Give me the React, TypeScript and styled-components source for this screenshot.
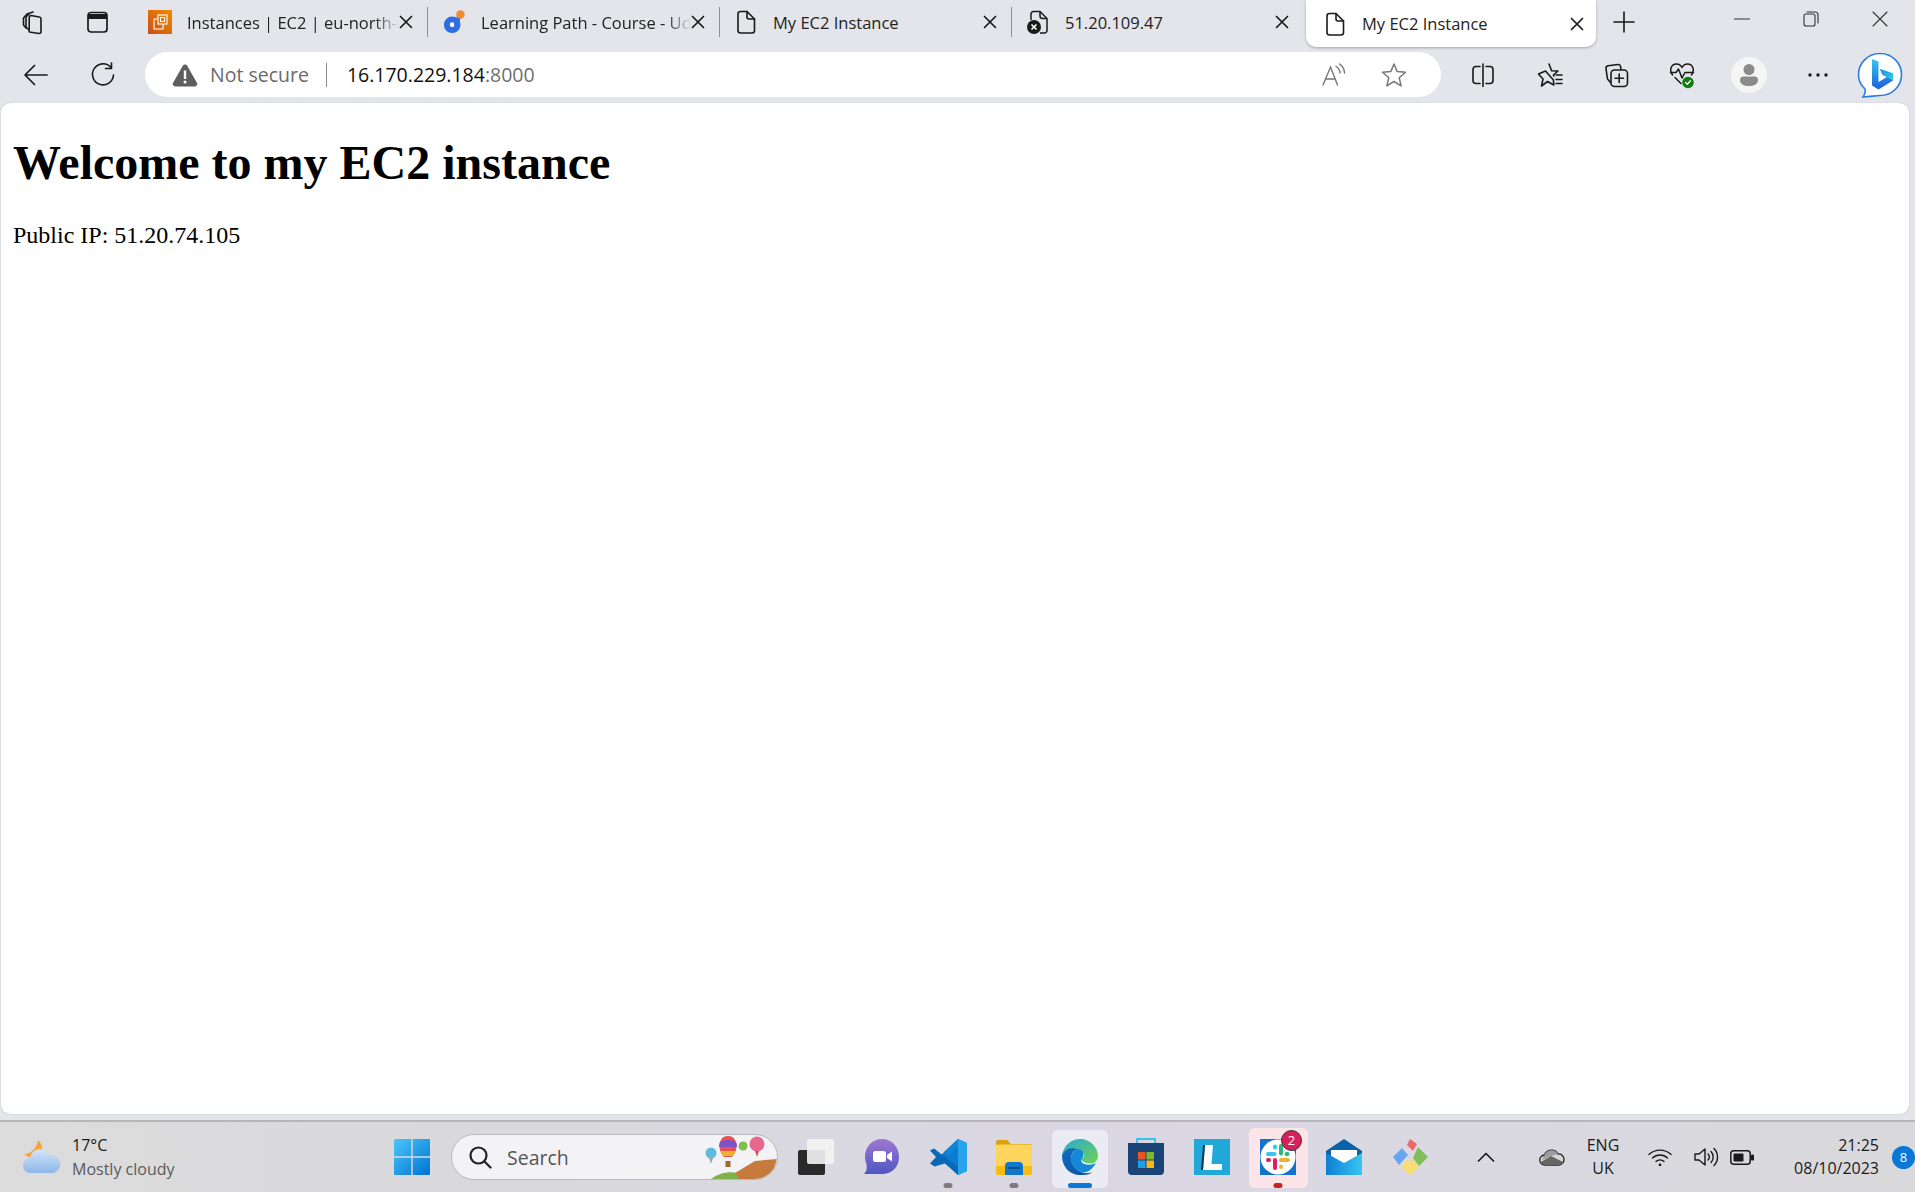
import styled, { createGlobalStyle } from "styled-components";
import { ReactNode } from "react";

const GlobalStyle = createGlobalStyle`
    html, body {
        margin: 0;
        padding: 0;
        height: 100%;
        overflow: hidden;
        background: #e3e5ea;
    }
    #root {
        height: 100%;
    }
`;

const UI_FONT = `"Open Sans", "Noto Sans", sans-serif`;

const Window = styled.div`
    height: 100vh;
    display: flex;
    flex-direction: column;
    font-family: ${UI_FONT};
    color: #1a1a1a;
`;

/* ---------- tab strip ---------- */

const TabStrip = styled.div`
    height: 52px;
    flex: none;
    display: flex;
    align-items: flex-start;
`;

const StripActions = styled.div`
    width: 134px;
    height: 44px;
    flex: none;
    display: flex;
    align-items: center;
`;

const StripSlot = styled.div<{ $w: number }>`
    width: ${(p) => p.$w}px;
    display: flex;
    justify-content: center;
    flex: none;
`;

const Tab = styled.div<{ $active?: boolean; $w: number }>`
    width: ${(p) => p.$w}px;
    height: ${(p) => (p.$active ? 47 : 44)}px;
    flex: none;
    display: flex;
    align-items: center;
    padding: 0 ${(p) => (p.$active ? 12 : 14)}px 0 ${(p) => (p.$active ? 17 : 14)}px;
    box-sizing: border-box;
    position: relative;
    background: ${(p) => (p.$active ? "#fff" : "transparent")};
    border-radius: ${(p) => (p.$active ? "0 0 10px 10px" : "0")};
    box-shadow: ${(p) => (p.$active ? "0 1px 3px rgba(0,0,0,.28)" : "none")};
    margin-left: ${(p) => (p.$active ? 3 : 0)}px;
`;

const TabSeparator = styled.div`
    width: 1px;
    height: 30px;
    margin-top: 7px;
    flex: none;
    background: #8f8f92;
`;

const TabIcon = styled.div`
    width: 24px;
    height: 24px;
    flex: none;
    display: flex;
    align-items: center;
    justify-content: center;
`;

const TabTitle = styled.div<{ $fade?: boolean }>`
    flex: 1;
    min-width: 0;
    margin-left: 15px;
    font-size: 16.5px;
    white-space: nowrap;
    overflow: hidden;
    color: #222;
    ${(p) =>
        p.$fade &&
        `-webkit-mask-image: linear-gradient(to right, #000 88%, transparent 100%);
         mask-image: linear-gradient(to right, #000 88%, transparent 100%);`}
`;

const WindowControls = styled.div`
    margin-left: auto;
    display: flex;
    align-items: center;
    height: 38px;
    padding-right: 0;
`;

const PlusSlot = styled.div`
    width: 56px;
    height: 44px;
    display: flex;
    align-items: center;
    justify-content: center;
    margin-left: 0;
`;

/* ---------- address row ---------- */

const ToolRow = styled.div`
    height: 45px;
    flex: none;
    display: flex;
    align-items: center;
`;

const NavButton = styled.div<{ $w: number }>`
    width: ${(p) => p.$w}px;
    flex: none;
    display: flex;
    align-items: center;
    justify-content: center;
`;

const AddressPill = styled.div`
    width: 1296px;
    height: 45px;
    flex: none;
    background: #fff;
    border-radius: 23px;
    display: flex;
    align-items: center;
    padding: 0 18px 0 27px;
    box-sizing: border-box;
`;

const NotSecure = styled.span`
    font-size: 19.5px;
    color: #6a6a6a;
    margin-left: 12px;
`;

const AddressDivider = styled.div`
    width: 1px;
    height: 24px;
    background: #8a8a8a;
    margin: 0 20px 0 17px;
`;

const Url = styled.span`
    font-size: 19.5px;
    color: #111;
    flex: 1;
`;

const UrlPort = styled.span`
    color: #6f6f6f;
`;

const PillAction = styled.div<{ $w: number }>`
    width: ${(p) => p.$w}px;
    display: flex;
    justify-content: center;
`;

const ToolIcons = styled.div`
    flex: 1;
    display: flex;
    align-items: center;
    padding-left: 9px;
`;

const ToolSlot = styled.div<{ $w: number }>`
    width: ${(p) => p.$w}px;
    flex: none;
    display: flex;
    align-items: center;
    justify-content: center;
`;

const ProfileCircle = styled.div`
    width: 36px;
    height: 36px;
    border-radius: 50%;
    background: #f5f5f6;
    display: flex;
    align-items: center;
    justify-content: center;
`;

/* ---------- page ---------- */

const PageFrame = styled.main`
    flex: 1;
    min-height: 0;
    margin: 6px 6px 6px 1px;
    background: #fff;
    border-radius: 9px 9px 9px 9px;
    overflow: hidden;
    font-family: "Liberation Serif", "Times New Roman", serif;
    color: #000;
    padding: 32px 12px 0;
    box-shadow: 0 0 1px rgba(0, 0, 0, .3);
`;

const Heading = styled.h1`
    font-size: 48px;
    font-weight: bold;
    margin: 0 0 32px;
`;

const Paragraph = styled.p`
    font-size: 24px;
    margin: 0;
`;

/* ---------- taskbar ---------- */

const Taskbar = styled.footer`
    height: 70px;
    flex: none;
    border-top: 2px solid #b6b6ba;
    background: linear-gradient(to right, #dcdcdc 0%, #d9d9dc 25%, #dad7e3 55%, #dad8e2 70%, #d9d9db 100%);
    display: flex;
    align-items: center;
`;

const Weather = styled.div`
    width: 394px;
    flex: none;
    box-sizing: border-box;
    padding-left: 23px;
    display: flex;
    align-items: center;
    gap: 11px;
`;

const WeatherText = styled.div`
    display: flex;
    flex-direction: column;
    font-size: 16px;
    line-height: 24px;
    color: #1b1b1b;
`;

const WeatherSub = styled.span`
    color: #5a5a5a;
`;

const SearchPill = styled.div`
    width: 327px;
    height: 46px;
    flex: none;
    margin-left: 21px;
    background: #f3f3f5;
    border: 1px solid #b9b9bc;
    box-sizing: border-box;
    border-radius: 23px;
    display: flex;
    align-items: center;
    padding-left: 16px;
    overflow: hidden;
    font-size: 19.5px;
    color: #555;
`;

const SearchLabel = styled.span`
    flex: 1;
    margin-left: 15px;
`;

const Dock = styled.div`
    margin-left: 5px;
    display: flex;
    flex: none;
`;

const DockSlot = styled.div<{ $state?: "open" | "active" | "alert" }>`
    width: 66px;
    height: 66px;
    flex: none;
    display: flex;
    align-items: center;
    justify-content: center;
    position: relative;

    &::before {
        content: "";
        display: ${(p) => (p.$state === "active" || p.$state === "alert" ? "block" : "none")};
        position: absolute;
        left: ${(p) => (p.$state === "alert" ? 4 : 5)}px;
        right: ${(p) => (p.$state === "alert" ? 3 : 5)}px;
        top: ${(p) => (p.$state === "alert" ? 4 : 6)}px;
        bottom: ${(p) => (p.$state === "alert" ? 2 : 2)}px;
        border-radius: 6px;
        background: ${(p) => (p.$state === "alert" ? "#fbe5e8" : "#ebebf3")};
    }

    &::after {
        content: "";
        display: ${(p) => (p.$state ? "block" : "none")};
        position: absolute;
        bottom: 2px;
        left: 50%;
        transform: translateX(-50%);
        height: 5px;
        border-radius: 3px;
        width: ${(p) => (p.$state === "active" ? 24 : 9)}px;
        background: ${(p) =>
            p.$state === "active" ? "#0a78d7" : p.$state === "alert" ? "#c4261d" : "#7d7d80"};
    }

    svg {
        position: relative;
        z-index: 1;
    }
`;

const SlackBadge = styled.span`
    position: absolute;
    z-index: 2;
    left: 36px;
    top: 6px;
    width: 21px;
    height: 21px;
    border-radius: 50%;
    background: #d81e5b;
    border: 1px solid #333;
    box-sizing: border-box;
    color: #fff;
    font-size: 13px;
    line-height: 19px;
    text-align: center;
`;

const Tray = styled.div`
    flex: 1;
    display: flex;
    align-items: center;
    color: #1b1b1b;
`;

const TraySlot = styled.div<{ $w: number }>`
    width: ${(p) => p.$w}px;
    flex: none;
    display: flex;
    justify-content: center;
    align-items: center;
`;

const TrayLang = styled.div`
    width: 56px;
    flex: none;
    text-align: center;
    font-size: 16px;
    line-height: 23px;
`;

const TrayClock = styled.div`
    width: 118px;
    flex: none;
    text-align: right;
    font-size: 16px;
    line-height: 23px;
`;

const NotifyBadge = styled.div`
    width: 23px;
    height: 23px;
    border-radius: 50%;
    margin-left: 13px;
    background: #0a78d7;
    color: #fff;
    font-size: 13px;
    line-height: 23px;
    text-align: center;
    flex: none;
`;

/* ---------- drawn icons ---------- */

const Stroke = (props: { size: number; w?: number; color?: string; sw?: number; children: ReactNode; h?: number }) => (
    <svg
        width={props.size}
        height={props.h ?? props.size}
        viewBox={`0 0 ${props.size} ${props.h ?? props.size}`}
        fill="none"
        stroke={props.color ?? "#1a1a1a"}
        strokeWidth={props.sw ?? 1.6}
        strokeLinecap="round"
        strokeLinejoin="round"
    >
        {props.children}
    </svg>
);

const WorkspacesIcon = () => (
    <Stroke size={26}>
        <path d="M8.5 23 l9.5 1.5 a2 2 0 0 0 2-2 V10 a2 2 0 0 0-1.8-2 L10 6.5 a2 2 0 0 0-1.8 2 V21 a2 2 0 0 0 .3 2Z" />
        <path d="M8 5 L5 8 V18 L8 21" />
        <path d="M12 3 L6 5 L2.5 9 V16 L5 19" />
    </Stroke>
);

const TabActionsIcon = () => (
    <Stroke size={24} sw={1.7}>
        <rect x="3" y="2.5" width="19" height="19.5" rx="3" />
        <path d="M3 8h19" strokeWidth={5} strokeLinecap="butt" transform="translate(0 -1.5)" />
    </Stroke>
);

const CloseX = ({ size = 14 }: { size?: number }) => (
    <Stroke size={size} sw={1.7}>
        <path d={`M1.5 1.5 L${size - 1.5} ${size - 1.5} M${size - 1.5} 1.5 L1.5 ${size - 1.5}`} />
    </Stroke>
);

const AwsIcon = () => (
    <svg width="24" height="24" viewBox="0 0 24 24">
        <defs>
            <linearGradient id="awsGrad" x1="0" y1="1" x2="1" y2="0">
                <stop offset="0" stopColor="#c8511b" />
                <stop offset="1" stopColor="#f08a00" />
            </linearGradient>
        </defs>
        <rect width="24" height="24" fill="url(#awsGrad)" />
        <g fill="none" stroke="#fff" strokeWidth="1.1">
            <rect x="10" y="5" width="9" height="9" />
            <path d="M10 9H6v10h9v-5" />
            <rect x="12.5" y="7.5" width="4" height="4" />
        </g>
    </svg>
);

const LearningIcon = () => (
    <svg width="26" height="26" viewBox="0 0 26 26">
        <circle cx="11" cy="16" r="9" fill="#2f6de6" />
        <circle cx="11" cy="16" r="2.6" fill="#fff" />
        <path d="M16 7 L20 9 L17 21 L13 16Z" fill="#2f6de6" />
        <circle cx="20" cy="5" r="4.6" fill="#f5892d" />
    </svg>
);

const PageIcon = () => (
    <Stroke size={24} sw={1.6}>
        <path d="M4 4a2.5 2.5 0 0 1 2.5-2.5H13L20.5 9v11.5A2.5 2.5 0 0 1 18 23H6.5A2.5 2.5 0 0 1 4 20.5Z" />
        <path d="M13 1.5V7a2 2 0 0 0 2 2h5.5" />
    </Stroke>
);

const PageErrorIcon = () => (
    <svg width="24" height="24" viewBox="0 0 24 24" fill="none" stroke="#1a1a1a" strokeWidth="1.5" strokeLinejoin="round">
        <path d="M5 10V4a2.5 2.5 0 0 1 2.5-2.5H14L21 8.5v12a2.5 2.5 0 0 1-2.5 2.5H14" />
        <path d="M14 1.5V6a2.5 2.5 0 0 0 2.5 2.5H21" />
        <circle cx="8" cy="17" r="7" fill="#1a1a1a" stroke="none" />
        <path d="M5.5 14.5l5 5M10.5 14.5l-5 5" stroke="#fff" strokeWidth="1.6" />
    </svg>
);

const BackIcon = () => (
    <Stroke size={26} sw={1.7}>
        <path d="M24 13H2 M11.5 3.5 L2 13 L11.5 22.5" />
    </Stroke>
);

const RefreshIcon = () => (
    <Stroke size={26} sw={1.6}>
        <path d="M21 5.5 A10.5 10.5 0 1 0 23.5 13" />
        <path d="M21.5 1 V6.5 H15.5" />
    </Stroke>
);

const WarningIcon = () => (
    <svg width="26" height="24" viewBox="0 0 26 24">
        <path d="M13 1.5 a2.5 2.5 0 0 1 2.2 1.2 L25 20 a2.4 2.4 0 0 1-2.1 3.5 H3.1 A2.4 2.4 0 0 1 1 20 L10.8 2.7 A2.5 2.5 0 0 1 13 1.5Z" fill="#5e5e5e" />
        <rect x="11.8" y="7.5" width="2.4" height="8.5" fill="#fff" />
        <circle cx="13" cy="19" r="1.5" fill="#fff" />
    </svg>
);

const ReadAloudIcon = () => (
    <svg width="26" height="24" viewBox="0 0 26 24" fill="none" stroke="#777" strokeWidth="1.4" strokeLinecap="round">
        <path d="M2 22 L9.5 4 L16.5 22 M4.5 16 H14.5" />
        <path d="M15 3.5 a8 8 0 0 1 4 6.5 M18.5 1 a11 11 0 0 1 5 9" />
    </svg>
);

const StarIcon = () => (
    <Stroke size={26} color="#777" sw={1.5}>
        <path d="M13 2 L16.2 9.6 L24.5 10.3 L18.2 15.7 L20.1 23.8 L13 19.5 L5.9 23.8 L7.8 15.7 L1.5 10.3 L9.8 9.6Z" />
    </Stroke>
);

const SplitIcon = () => (
    <Stroke size={24} sw={1.6}>
        <path d="M9 3.5H5a3 3 0 0 0-3 3v11a3 3 0 0 0 3 3h4" />
        <path d="M15 3.5h4a3 3 0 0 1 3 3v11a3 3 0 0 1-3 3h-4" />
        <path d="M12 1v23" />
    </Stroke>
);

const FavoritesIcon = () => (
    <Stroke size={26} sw={1.6}>
        <path d="M12 2 L14.6 8.8 L21 9 L16.4 13 L17 14 M16.4 18 L16.8 23 L10.5 19.5 L4.5 24 L6 17 L1.5 12 L8.5 9Z" />
        <path d="M19 13 H25 M19 17.5 H25 M19 21.5 H25" />
    </Stroke>
);

const CollectionsIcon = () => (
    <Stroke size={26} sw={1.6}>
        <path d="M15 2.5 L5 3.8 a2.5 2.5 0 0 0-2 2.8 L4.5 17 l3 3.5" />
        <path d="M15.5 2.5 a2 2 0 0 1 2 1.8 L18 7" />
        <rect x="8" y="8" width="16.5" height="16.5" rx="3.5" />
        <path d="M16.2 12v8.5 M12 16.2h8.5" />
    </Stroke>
);

const HealthIcon = () => (
    <svg width="26" height="28" viewBox="0 0 26 28" fill="none" stroke="#1a1a1a" strokeWidth="1.5" strokeLinecap="round" strokeLinejoin="round">
        <path d="M3.5 14 C0 9.5 2 3 7.5 3 C10 3 12 4.5 13 6.5 C14 4.5 16 3 18.5 3 C24 3 26 9.5 22.5 14" />
        <path d="M1.5 11.5 H7 L9.5 8 L13 17 L16 11.5 H24.5" />
        <path d="M6 16.5 L12 22.5" />
        <circle cx="19" cy="21.5" r="5.8" fill="#107c10" stroke="none" />
        <path d="M16.5 21.5 L18.3 23.3 L21.5 19.8" stroke="#fff" strokeWidth="1.3" />
    </svg>
);

const PersonIcon = () => (
    <svg width="20" height="24" viewBox="0 0 20 24">
        <circle cx="10" cy="6.5" r="5.5" fill="#8b8b8b" />
        <path d="M1 17a3.5 3.5 0 0 1 3.5-3.5h11A3.5 3.5 0 0 1 19 17c0 4-4 6-9 6s-9-2-9-6Z" fill="#8b8b8b" />
    </svg>
);

const DotsIcon = () => (
    <svg width="20" height="4" viewBox="0 0 20 4" fill="#1a1a1a">
        <circle cx="2" cy="2" r="1.7" />
        <circle cx="10" cy="2" r="1.7" />
        <circle cx="18" cy="2" r="1.7" />
    </svg>
);

const BingIcon = () => (
    <svg width="46" height="46" viewBox="0 0 46 46">
        <defs>
            <linearGradient id="bingA" x1="0" y1="0" x2="0" y2="1">
                <stop offset="0" stopColor="#36c5f0" />
                <stop offset="1" stopColor="#1d5fd6" />
            </linearGradient>
            <linearGradient id="bingB" x1="0" y1="0" x2="1" y2="1">
                <stop offset="0" stopColor="#1b8ee0" />
                <stop offset="1" stopColor="#32d0e8" />
            </linearGradient>
        </defs>
        <path
            d="M23 1.5 C35 1.5 44.5 11 44.5 22.5 C44.5 34.5 35 43.5 23 43.5 C19 43.5 14 44.5 6 45 C8 42 8.5 39 8 37 C3.5 33 1.5 28 1.5 22.5 C1.5 11 11 1.5 23 1.5Z"
            fill="#fff"
            stroke="#2a7de1"
            strokeWidth="1.6"
        />
        <path d="M15 7 L21.5 9.5 V30 L30 25 L25.5 22.8 L23 17 L36 21.5 V28.5 L21.5 37.5 L15 33.5Z" fill="url(#bingA)" />
        <path d="M23 17 L36 21.5 V28.5 L30 25 L25.5 22.8Z" fill="url(#bingB)" />
    </svg>
);

const MinimizeIcon = () => (
    <Stroke size={16} sw={1.1} color="#333">
        <path d="M0 8H16" />
    </Stroke>
);

const RestoreIcon = () => (
    <Stroke size={16} sw={1.1} color="#333">
        <rect x="1" y="3" width="11" height="12" rx="2" />
        <path d="M4 1h8a3 3 0 0 1 3 3v8" />
    </Stroke>
);

const CloudMoonIcon = () => (
    <svg width="38" height="36" viewBox="0 0 38 36">
        <defs>
            <linearGradient id="cloudGrad" x1="0" y1="0" x2="0" y2="1">
                <stop offset="0" stopColor="#d4e4fb" />
                <stop offset="1" stopColor="#8db7ea" />
            </linearGradient>
        </defs>
        <path d="M15 1 C20 5 20 12 17 17 C13 20 6 20 1 15 C8 15 14 9 15 1Z" fill="#f3a53b" />
        <path d="M8 34 a7.5 7.5 0 0 1-1-15 a10 10 0 0 1 19-3 a9 9 0 0 1 4 18Z" fill="url(#cloudGrad)" />
    </svg>
);

const WindowsLogo = () => (
    <svg width="36" height="36" viewBox="0 0 36 36">
        <defs>
            <linearGradient id="winGrad" x1="0" y1="0" x2="1" y2="1">
                <stop offset="0" stopColor="#4cc7fb" />
                <stop offset="1" stopColor="#0072d0" />
            </linearGradient>
        </defs>
        <path d="M1 0H17.3V17.3H0V1A1 1 0 0 1 1 0Z M18.7 0H35a1 1 0 0 1 1 1V17.3H18.7Z M0 18.7H17.3V36H1a1 1 0 0 1-1-1Z M18.7 18.7H36V35a1 1 0 0 1-1 1H18.7Z" fill="url(#winGrad)" />
    </svg>
);

const SearchGlass = () => (
    <Stroke size={24} sw={2.2} color="#222">
        <circle cx="10.5" cy="10.5" r="8" />
        <path d="M16.5 16.5L22.5 22.5" />
    </Stroke>
);

const BalloonsArt = () => (
    <svg width="72" height="44" viewBox="0 0 72 44">
        <path d="M6 44 C18 36 28 36 38 40 L44 44Z" fill="#7fb24a" />
        <path d="M30 38 L50 26 L72 24 L66 44 H34Z" fill="#c77a3e" />
        <circle cx="6" cy="18" r="5.5" fill="#5fbcd8" />
        <path d="M4 23 L6 29 L8 23Z" fill="#9aa" />
        <path d="M19 22 C12 15 13 1 23 1 C33 1 34 15 27 22Z" fill="#e45252" />
        <path d="M14.5 8 C17 4 29 4 31.5 8 L32 12 H14Z" fill="#8052c8" />
        <path d="M15 16 H31 L28 21 H18Z" fill="#f0b030" />
        <rect x="20.5" y="26" width="5" height="6" fill="#9a6a30" />
        <circle cx="38" cy="11" r="4.5" fill="#7ec04a" />
        <circle cx="52" cy="9" r="7.5" fill="#e8678e" />
        <path d="M50 16 L52 22 L54 16Z" fill="#c55" />
    </svg>
);

const TaskViewIcon = () => (
    <svg width="36" height="36" viewBox="0 0 36 36">
        <rect x="0" y="11" width="27" height="25" rx="2" fill="#2a2a2a" />
        <rect x="9" y="0" width="27" height="25" rx="2" fill="#f4f4f4" fillOpacity=".9" />
    </svg>
);

const ChatIcon = () => (
    <svg width="36" height="38" viewBox="0 0 36 38">
        <defs>
            <linearGradient id="chatGrad" x1="0" y1="0" x2="0" y2="1">
                <stop offset="0" stopColor="#a078cf" />
                <stop offset="1" stopColor="#4d57c4" />
            </linearGradient>
        </defs>
        <path d="M18 1 C28 1 35 9 35 19 C35 29 28 36 18 36 H0 C3 33 3 30 2.5 26 C1.5 24 1 21 1 19 C1 9 8 1 18 1Z" fill="url(#chatGrad)" />
        <rect x="9" y="13" width="13" height="11" rx="2.5" fill="#fff" />
        <path d="M23 17 L28 13.5 V23.5 L23 20Z" fill="#fff" />
    </svg>
);

const VsCodeIcon = () => (
    <svg width="37" height="36" viewBox="0 0 37 36">
        <path d="M28 0 L37 4 V32 L28 36 L9 18Z" fill="#0a7bcf" />
        <path d="M28 0 L37 4 V32 L28 36Z" fill="#28a4ee" />
        <path d="M0 11.5 L4 9.5 L28 28 V36 L15 24.5 L4.5 27.5 L0 24.5 L6 18Z" fill="#0868b5" />
        <path d="M28 8 V0 L14 13 L19 17Z" fill="#1284d6" />
    </svg>
);

const FolderIcon = () => (
    <svg width="36" height="36" viewBox="0 0 36 36">
        <path d="M0 3 a2 2 0 0 1 2-2 H11 L15 5 H34 a2 2 0 0 1 2 2 V12 H0Z" fill="#d9a10e" />
        <rect x="0" y="5.5" width="36" height="30" rx="1.5" fill="#fdd45c" />
        <path d="M0 27 H36 V34 a2 2 0 0 1-2 2 H2 a2 2 0 0 1-2-2Z" fill="#f8bc14" />
        <path d="M9 36 V27 a4 4 0 0 1 4-4 H23 a4 4 0 0 1 4 4 V36Z" fill="#0f78cc" />
        <rect x="12" y="28" width="12" height="2" fill="#0a4f90" />
    </svg>
);

const EdgeIcon = () => (
    <svg width="36" height="36" viewBox="0 0 36 36">
        <defs>
            <linearGradient id="edgeBlue" x1="0" y1="0" x2="1" y2="1">
                <stop offset="0" stopColor="#0f6fc4" />
                <stop offset="1" stopColor="#0f4f9c" />
            </linearGradient>
            <linearGradient id="edgeGreen" x1="0" y1="0" x2="1" y2="1">
                <stop offset="0" stopColor="#2aa8d8" />
                <stop offset="1" stopColor="#6fd34f" />
            </linearGradient>
        </defs>
        <path d="M18 0 C28 0 36 8 36 17 C36 22 32 25 27 25 C22 25 19 23 19 20 C22 19 23 17 21.5 14 C19 10 11 9 6 13 C2 16 1 19 0 17 C1 7 9 0 18 0Z" fill="url(#edgeGreen)" />
        <path d="M0 17 C2 10 9 8 15 10 C10 12 8 18 10 24 C12 30 19 35 26 34 C30 34 31 33 31 33 C27 36 22 36 18 36 C8 36 0 28 0 17Z" fill="url(#edgeBlue)" />
        <path d="M15 10 C20 10 23 14 21 18 C19 21 19 24 23 25 C27 26 31 26 34 24 C30 31 24 35 19 33 C13 31 8 25 9 19 C10 14 12 11 15 10Z" fill="#1489d8" />
        <path d="M19 20 C21 24 26 25 30 24 C25 27 19 25 19 20Z" fill="#fff" opacity=".9" />
    </svg>
);

const StoreIcon = () => (
    <svg width="36" height="38" viewBox="0 0 36 38">
        <path d="M9 5 V1 H27 V5" fill="none" stroke="#35c0ee" strokeWidth="1.8" />
        <path d="M0 5 H36 V33 a4 4 0 0 1-4 4 H4 a4 4 0 0 1-4-4Z" fill="#1a4476" />
        <rect x="10" y="14" width="7.5" height="7.5" fill="#e9541f" />
        <rect x="18.5" y="14" width="7.5" height="7.5" fill="#7db828" />
        <rect x="10" y="22.5" width="7.5" height="7.5" fill="#1aa1e8" />
        <rect x="18.5" y="22.5" width="7.5" height="7.5" fill="#fbb616" />
    </svg>
);

const LIcon = () => (
    <svg width="36" height="36" viewBox="0 0 36 36">
        <rect width="36" height="36" fill="#21a8d8" />
        <path d="M11 6 H19 L17.5 25 H28 V31 H9Z" fill="#fff" />
        <path d="M11 6 L9 31 L7 31 L9 6Z" fill="#14384d" />
    </svg>
);

const SlackIcon = () => (
    <svg width="36" height="36" viewBox="0 0 36 36">
        <rect width="36" height="36" fill="#1273cc" />
        <circle cx="18" cy="18" r="17.5" fill="#fff" />
        <g strokeWidth="4" strokeLinecap="round" fill="none">
            <path d="M8 15h6.5" stroke="#36c5f0" />
            <path d="M15 7.5v1" stroke="#36c5f0" />
            <path d="M21 7v7.5" stroke="#2eb67d" />
            <path d="M26.5 15h1" stroke="#2eb67d" />
            <path d="M21 21h7" stroke="#ecb22e" />
            <path d="M21 27.5v.5" stroke="#ecb22e" />
            <path d="M15 21v8" stroke="#e01e5a" />
            <path d="M8 21h1" stroke="#e01e5a" />
        </g>
    </svg>
);

const MailIcon = () => (
    <svg width="36" height="36" viewBox="0 0 36 36">
        <defs>
            <linearGradient id="mailGrad" x1="0" y1="0" x2="1" y2="0">
                <stop offset="0" stopColor="#0f7ed4" />
                <stop offset="1" stopColor="#38c5f2" />
            </linearGradient>
        </defs>
        <path d="M0 12 L18 0 L36 12 V36 H0Z" fill="#0a62a8" />
        <path d="M5 11 H31 V20 L18 27 L5 20Z" fill="#fff" />
        <path d="M0 14 L18 24 L36 14 V36 H0Z" fill="url(#mailGrad)" />
    </svg>
);

const GemIcon = () => (
    <svg width="38" height="38" viewBox="0 0 38 38">
        <path d="M2 19 L11 10 L17 17 L8 27Z" fill="#6aa5f0" />
        <path d="M19 1 L26 6 L22 13 L16 7Z" fill="#ea6a6a" />
        <path d="M27 9 L37 19 L28 28 L22 20Z" fill="#7fbf5a" />
        <path d="M10 29 L16 21 L19 24 L22 21 L28 29 L19 37Z" fill="#f7dd73" />
        <circle cx="19" cy="19" r="2" fill="#d8d8de" />
    </svg>
);

const ChevronUp = () => (
    <Stroke size={18} h={10} sw={1.7}>
        <path d="M1.5 9 L9 1.5 L16.5 9" />
    </Stroke>
);

const OneDriveIcon = () => (
    <svg width="26" height="18" viewBox="0 0 26 18">
        <path d="M6 17 a5 5 0 0 1-.5-10 A7.5 7.5 0 0 1 19 6 a5.5 5.5 0 0 1 1 11Z" fill="#d6d6d8" stroke="#222" strokeWidth="1.3" />
        <path d="M2 14 L12 8 L24 14 V15.5 L20 17 H6 L2 15.5Z" fill="#666" />
        <path d="M5.5 7 A7.5 7.5 0 0 1 19 6 L12 8 L3 12Z" fill="#9d9d9f" />
    </svg>
);

const WifiIcon = () => (
    <Stroke size={24} h={20} sw={1.4}>
        <path d="M1 7.5 a16 16 0 0 1 22 0" />
        <path d="M4.5 11 a11 11 0 0 1 15 0" />
        <path d="M8 14.5 a6 6 0 0 1 8 0" />
        <circle cx="12" cy="17.8" r="1.4" fill="#1a1a1a" stroke="none" />
    </Stroke>
);

const SpeakerIcon = () => (
    <Stroke size={25} h={20} sw={1.4}>
        <path d="M1 7 H5 L11 2 V18 L5 13 H1Z" />
        <path d="M14 7 a4 4 0 0 1 0 6" />
        <path d="M17 4.5 a8 8 0 0 1 0 11" />
        <path d="M20 1.5 a12 12 0 0 1 0 17" />
    </Stroke>
);

const BatteryIcon = () => (
    <svg width="24" height="15" viewBox="0 0 24 15">
        <rect x=".8" y=".8" width="19.4" height="13.4" rx="3" fill="none" stroke="#1a1a1a" strokeWidth="1.5" />
        <rect x="3.5" y="3.5" width="10" height="8" rx="1" fill="#1a1a1a" />
        <rect x="21" y="4.5" width="3" height="6" rx="1" fill="#1a1a1a" />
    </svg>
);

export default function App() {
    return (
        <Window>
            <GlobalStyle />
            <TabStrip>
                <StripActions>
                    <StripSlot $w={68}><WorkspacesIcon /></StripSlot>
                    <StripSlot $w={58}><TabActionsIcon /></StripSlot>
                </StripActions>
                <Tab $w={293}>
                    <TabIcon><AwsIcon /></TabIcon>
                    <TabTitle $fade>Instances | EC2 | eu-north-1</TabTitle>
                    <CloseX />
                </Tab>
                <TabSeparator />
                <Tab $w={291}>
                    <TabIcon><LearningIcon /></TabIcon>
                    <TabTitle $fade>Learning Path - Course - Udemy</TabTitle>
                    <CloseX />
                </Tab>
                <TabSeparator />
                <Tab $w={291}>
                    <TabIcon><PageIcon /></TabIcon>
                    <TabTitle>My EC2 Instance</TabTitle>
                    <CloseX />
                </Tab>
                <TabSeparator />
                <Tab $w={291}>
                    <TabIcon><PageErrorIcon /></TabIcon>
                    <TabTitle>51.20.109.47</TabTitle>
                    <CloseX />
                </Tab>
                <Tab $active $w={290}>
                    <TabIcon><PageIcon /></TabIcon>
                    <TabTitle>My EC2 Instance</TabTitle>
                    <CloseX />
                </Tab>
                <PlusSlot>
                    <Stroke size={22} sw={1.6}><path d="M11 1V21M1 11H21" /></Stroke>
                </PlusSlot>
                <WindowControls>
                    <StripSlot $w={69}><MinimizeIcon /></StripSlot>
                    <StripSlot $w={69}><RestoreIcon /></StripSlot>
                    <StripSlot $w={70}><Stroke size={16} sw={1.1} color="#333"><path d="M1 1L15 15M15 1L1 15" /></Stroke></StripSlot>
                </WindowControls>
            </TabStrip>

            <ToolRow>
                <NavButton $w={72}><BackIcon /></NavButton>
                <NavButton $w={62}><RefreshIcon /></NavButton>
                <NavButton $w={11} />
                <AddressPill>
                    <WarningIcon />
                    <NotSecure>Not secure</NotSecure>
                    <AddressDivider />
                    <Url>16.170.229.184<UrlPort>:8000</UrlPort></Url>
                    <PillAction $w={60}><ReadAloudIcon /></PillAction>
                    <PillAction $w={59}><StarIcon /></PillAction>
                </AddressPill>
                <ToolIcons>
                    <ToolSlot $w={66}><SplitIcon /></ToolSlot>
                    <ToolSlot $w={67}><FavoritesIcon /></ToolSlot>
                    <ToolSlot $w={66}><CollectionsIcon /></ToolSlot>
                    <ToolSlot $w={65}><HealthIcon /></ToolSlot>
                    <ToolSlot $w={69}><ProfileCircle><PersonIcon /></ProfileCircle></ToolSlot>
                    <ToolSlot $w={69}><DotsIcon /></ToolSlot>
                    <ToolSlot $w={55}><BingIcon /></ToolSlot>
                </ToolIcons>
            </ToolRow>

            <PageFrame>
                <Heading>Welcome to my EC2 instance</Heading>
                <Paragraph>Public IP: 51.20.74.105</Paragraph>
            </PageFrame>

            <Taskbar>
                <Weather>
                    <CloudMoonIcon />
                    <WeatherText>
                        <span>17°C</span>
                        <WeatherSub>Mostly cloudy</WeatherSub>
                    </WeatherText>
                </Weather>
                <WindowsLogo />
                <SearchPill>
                    <SearchGlass />
                    <SearchLabel>Search</SearchLabel>
                    <BalloonsArt />
                </SearchPill>
                <Dock>
                    <DockSlot><TaskViewIcon /></DockSlot>
                    <DockSlot><ChatIcon /></DockSlot>
                    <DockSlot $state="open"><VsCodeIcon /></DockSlot>
                    <DockSlot $state="open"><FolderIcon /></DockSlot>
                    <DockSlot $state="active"><EdgeIcon /></DockSlot>
                    <DockSlot><StoreIcon /></DockSlot>
                    <DockSlot><LIcon /></DockSlot>
                    <DockSlot $state="alert"><SlackIcon /><SlackBadge>2</SlackBadge></DockSlot>
                    <DockSlot><MailIcon /></DockSlot>
                    <DockSlot><GemIcon /></DockSlot>
                </Dock>
                <Tray>
                    <TraySlot $w={86}><ChevronUp /></TraySlot>
                    <TraySlot $w={46}><OneDriveIcon /></TraySlot>
                    <TrayLang>ENG<br />UK</TrayLang>
                    <TraySlot $w={58}><WifiIcon /></TraySlot>
                    <TraySlot $w={34}><SpeakerIcon /></TraySlot>
                    <TraySlot $w={38}><BatteryIcon /></TraySlot>
                    <TrayClock>21:25<br />08/10/2023</TrayClock>
                    <NotifyBadge>8</NotifyBadge>
                </Tray>
            </Taskbar>
        </Window>
    );
}
